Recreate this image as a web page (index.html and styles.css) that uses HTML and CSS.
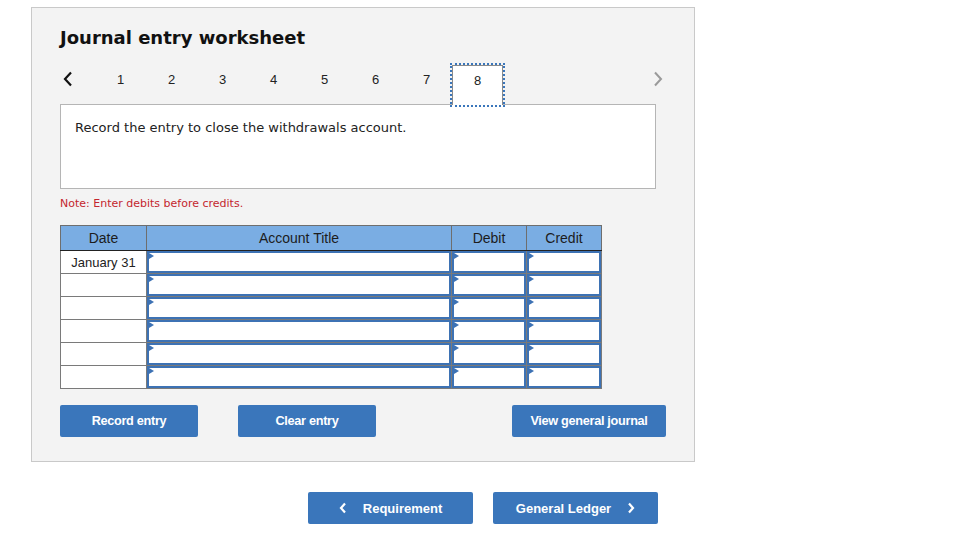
FILE: index.html
```html
<!DOCTYPE html>
<html>
<head>
<meta charset="utf-8">
<link rel="stylesheet" href="styles.css">
</head>
<body>
<div class="panel">
  <h1 class="title">Journal entry worksheet</h1>
  <div class="nav">
    <span class="arrow prev"><svg width="10" height="16" viewBox="0 0 10 16"><polyline points="8,1.5 2,8 8,14.5" fill="none" stroke="#111" stroke-width="2.2"/></svg></span>
    <span class="tab">1</span>
    <span class="tab">2</span>
    <span class="tab">3</span>
    <span class="tab">4</span>
    <span class="tab">5</span>
    <span class="tab">6</span>
    <span class="tab">7</span>
    <span class="tab active">8</span>
    <span class="arrow next"><svg width="10" height="16" viewBox="0 0 10 16"><polyline points="2,1.5 8,8 2,14.5" fill="none" stroke="#9a9a9a" stroke-width="2"/></svg></span>
  </div>
  <div class="prompt">Record the entry to close the withdrawals account.</div>
  <div class="note">Note: Enter debits before credits.</div>
  <table class="journal">
    <thead>
      <tr><th class="c-date">Date</th><th class="c-title">Account Title</th><th class="c-num">Debit</th><th class="c-num">Credit</th></tr>
    </thead>
    <tbody>
      <tr><td class="date">January 31</td><td><div class="inp"></div></td><td><div class="inp"></div></td><td><div class="inp"></div></td></tr>
      <tr><td class="date"></td><td><div class="inp"></div></td><td><div class="inp"></div></td><td><div class="inp"></div></td></tr>
      <tr><td class="date"></td><td><div class="inp"></div></td><td><div class="inp"></div></td><td><div class="inp"></div></td></tr>
      <tr><td class="date"></td><td><div class="inp"></div></td><td><div class="inp"></div></td><td><div class="inp"></div></td></tr>
      <tr><td class="date"></td><td><div class="inp"></div></td><td><div class="inp"></div></td><td><div class="inp"></div></td></tr>
      <tr><td class="date"></td><td><div class="inp"></div></td><td><div class="inp"></div></td><td><div class="inp"></div></td></tr>
    </tbody>
  </table>
  <div class="actions">
    <button class="btn w138">Record entry</button>
    <button class="btn w138">Clear entry</button>
    <button class="btn w154 push">View general journal</button>
  </div>
</div>
<div class="footer">
  <button class="btn big"><svg class="chev" width="8" height="12" viewBox="0 0 8 12"><polyline points="6,1.5 2,6 6,10.5" fill="none" stroke="#fff" stroke-width="2.2"/></svg><span class="lbl-r">Requirement</span></button>
  <button class="btn big"><span class="lbl-l">General Ledger</span><svg class="chev" width="8" height="12" viewBox="0 0 8 12"><polyline points="2,1.5 6,6 2,10.5" fill="none" stroke="#fff" stroke-width="2.2"/></svg></button>
</div>
</body>
</html>
```

FILE: styles.css
```css
html, body {
  margin: 0;
  padding: 0;
  background: #fff;
}
body {
  padding: 7px 0 0 31px;
  font-family: "Liberation Sans", Arial, sans-serif;
}
.panel {
  width: 606px;
  border: 1px solid #c9c9c9;
  background: #f3f3f3;
  padding: 19px 28px 24px 28px;
}
.title {
  margin: 0;
  font-family: "DejaVu Sans", Verdana, sans-serif;
  font-weight: bold;
  font-size: 18px;
  line-height: 22px;
  height: 22px;
  color: #111;
}
.nav {
  display: flex;
  align-items: flex-end;
  height: 41px;
  margin-top: 14px;
  position: relative;
  z-index: 1;
}
.arrow {
  height: 41px;
  box-sizing: border-box;
  padding-bottom: 9px;
  display: flex;
  align-items: center;
}
.prev {
  width: 35px;
  padding-left: 3px;
}
.next {
  margin-left: auto;
  padding-right: 3px;
}
.tab {
  width: 51px;
  height: 41px;
  box-sizing: border-box;
  display: flex;
  align-items: center;
  justify-content: center;
  padding-bottom: 8px;
  font-size: 13px;
  color: #222;
}
.tab.active {
  background: #fff;
  border: 1px solid #8a8a8a;
  border-bottom: none;
  outline: 2px dotted #3a76bb;
  outline-offset: 0;
  height: 40px;
  padding-bottom: 10px;
  margin-bottom: -1px;
}
.prompt {
  width: 596px;
  height: 85px;
  box-sizing: border-box;
  background: #fff;
  border: 1px solid #b5b5b5;
  padding: 15px 14px;
  font-family: "DejaVu Sans", Verdana, sans-serif;
  font-size: 13px;
  line-height: 16px;
  color: #222;
}
.note {
  margin-top: 8px;
  font-family: "DejaVu Sans", Verdana, sans-serif;
  font-size: 11px;
  line-height: 14px;
  color: #c4262e;
}
.journal {
  margin-top: 14px;
  width: 539px;
  border-collapse: collapse;
  table-layout: fixed;
  border: 1px solid #6e6e6e;
}
.journal th {
  background: #7aade3;
  height: 24px;
  padding: 0;
  font-weight: normal;
  font-size: 14px;
  color: #1c1c1c;
  border: 1px solid #6e6e6e;
  border-left: 1px solid #222;
  border-bottom: 1px solid #222;
}
.journal th:first-child {
  border-left: 1px solid #6e6e6e;
}
.c-date { width: 85px; }
.c-title { width: 304px; }
.c-num { width: 74px; }
.journal td {
  height: 22px;
  padding: 0;
  background: #fff;
  border: 1px solid #7a7a7a;
}
.journal td.date {
  text-align: center;
  font-size: 13px;
  color: #222;
}
.inp {
  position: relative;
  height: 18px;
  border: 2px solid #3d72b4;
}
.inp::before {
  content: "";
  position: absolute;
  left: 0;
  top: 0;
  border-left: 5px solid #3d72b4;
  border-top: 3.5px solid transparent;
  border-bottom: 3.5px solid transparent;
}
.actions {
  display: flex;
  gap: 40px;
  margin-top: 16px;
}
.push {
  margin-left: auto;
}
.btn {
  height: 32px;
  border: none;
  border-radius: 2px;
  background: #3a76bb;
  color: #fff;
  font-family: "Liberation Sans", Arial, sans-serif;
  font-weight: bold;
  font-size: 12.7px;
  letter-spacing: -0.3px;
  padding: 0;
  display: flex;
  align-items: center;
  justify-content: center;
}
.w138 { width: 138px; }
.w154 { width: 154px; }
.footer {
  display: flex;
  gap: 20px;
  margin-top: 30px;
  padding-left: 277px;
}
.btn.big {
  width: 165px;
  font-size: 13px;
  letter-spacing: 0;
}
.lbl-r { margin-left: 16px; }
.lbl-l { margin-right: 16px; }
.chev { display: block; }
```
